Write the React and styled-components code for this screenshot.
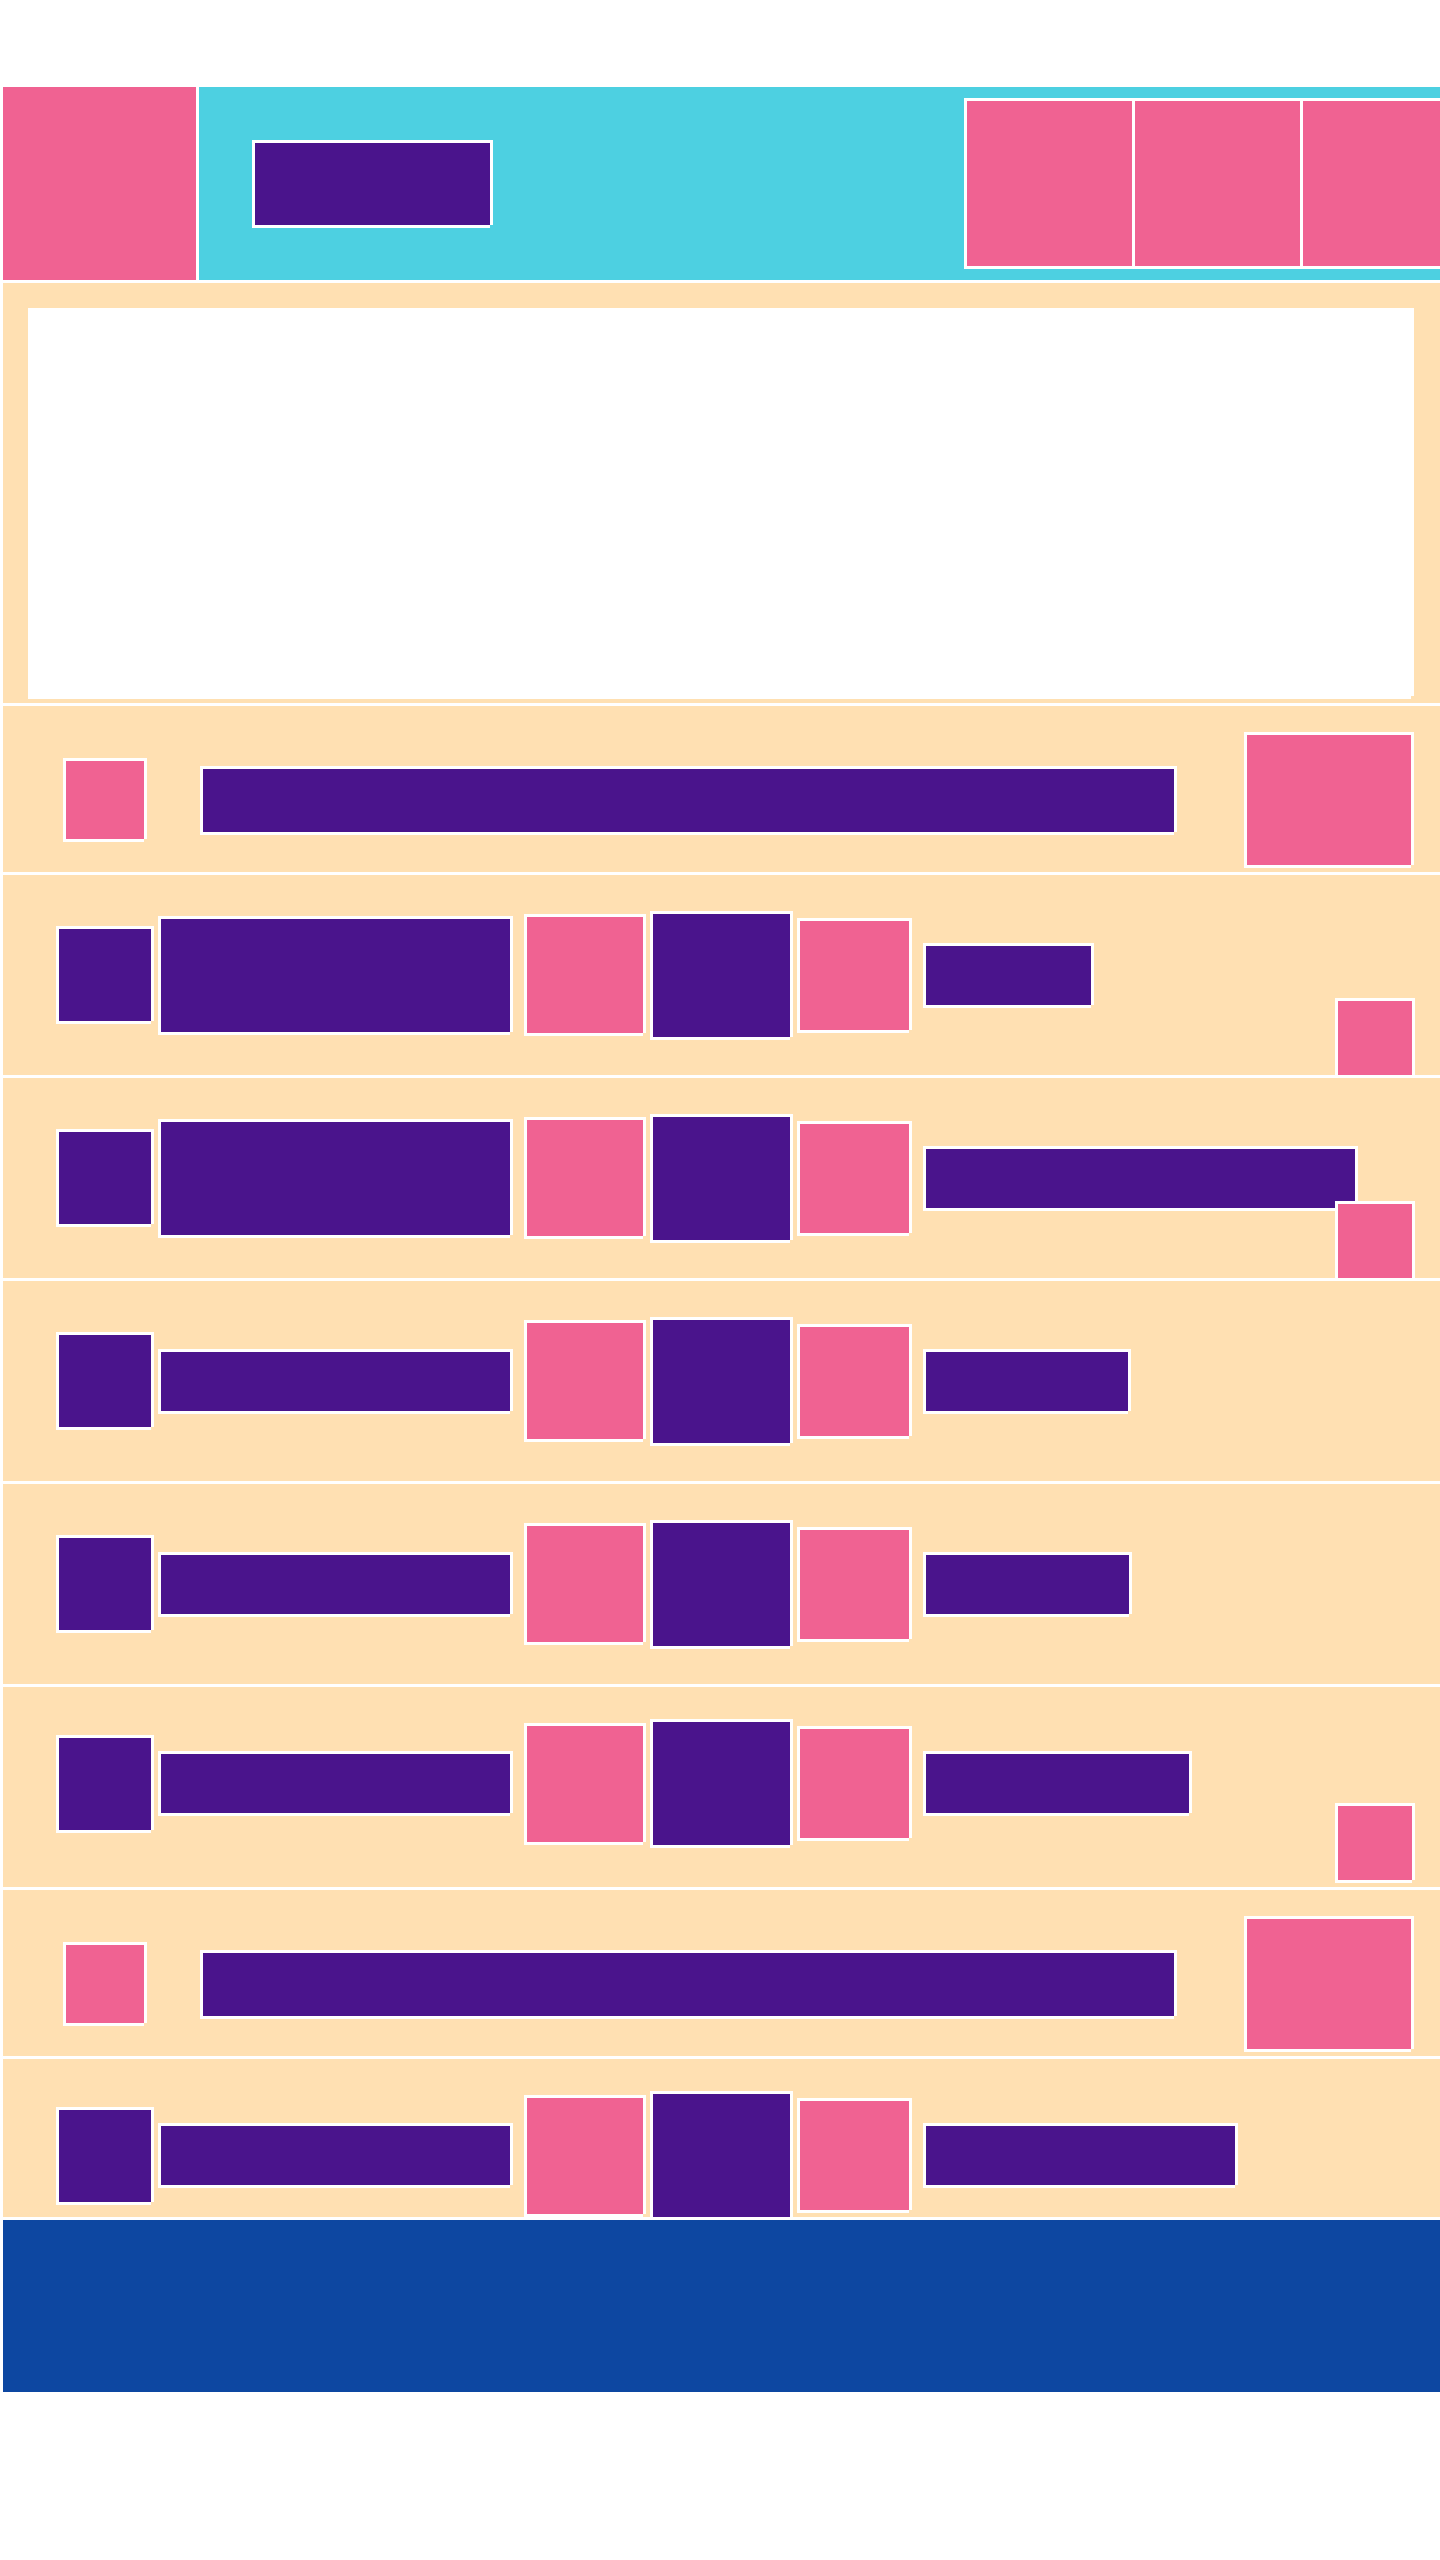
import React from "react"
import styled, { createGlobalStyle, css } from "styled-components"

const PINK = "#f06292"
const CYAN = "#4dd0e1"
const PURPLE = "#4a148c"
const PEACH = "#ffe0b2"
const BLUE = "#0d47a1"

const GlobalStyle = createGlobalStyle`
  * {
    box-sizing: border-box;
  }
  html,
  body {
    margin: 0;
    padding: 0;
    background: #fff;
  }
  body {
    overflow-x: hidden;
    font-family: "Liberation Sans", Arial, sans-serif;
  }
`

// white frame: drawn on top/left, cast on right/bottom so neighbours share one 3px line
const framed = css`
  border-top: 3px solid #fff;
  border-left: 3px solid #fff;
  box-shadow: 3px 0 0 #fff, 0 3px 0 #fff;
`

const Page = styled.div`
  width: 1440px;
  padding-top: 84px;
  overflow: hidden;
`

const Header = styled.header`
  display: flex;
  height: 196px;
`

const Logo = styled.div`
  ${framed}
  flex: none;
  width: 196px;
  height: 196px;
  background: ${PINK};
`

const Nav = styled.nav`
  ${framed}
  flex: 1;
  min-width: 0;
  display: flex;
  align-items: center;
  background: ${CYAN};
`

// $w / $h are the coloured area, the frame is added around it
const Box = styled.div`
  ${framed}
  flex: none;
  width: ${p => p.$w + 3}px;
  height: ${p => p.$h + 3}px;
  margin-bottom: 3px;
  background: ${p => p.$tone};
`

const MenuButton = styled(Box)`
  margin-left: 53px;
`

const Tabs = styled.div`
  display: flex;
  flex: none;
  margin-left: 474px;
`

const Main = styled.main`
  height: 1937px;
  overflow: hidden;
`

const Hero = styled.section`
  ${framed}
  background: ${PEACH};
  padding: 25px 25px 4px;
`

const SummaryRow = styled.div`
  ${framed}
  display: flex;
  align-items: center;
  height: 169px;
  padding: 22px 29px 0 60px;
  background: ${PEACH};
`

const Headline = styled(Box)`
  margin-left: 56px;
`

const Cover = styled(Box)`
  margin-left: auto;
`

const DetailRow = styled.div`
  ${framed}
  position: relative;
  display: flex;
  align-items: center;
  height: 203px;
  padding: 0 28px ${p => p.$lift || 0}px 53px;
  background: ${PEACH};
`

const Gap = styled(Box)`
  margin-left: ${p => p.$gap}px;
`

const Marker = styled(Box)`
  position: absolute;
  right: 28px;
  bottom: ${p => p.$lift || 0}px;
  margin: 0;
`

const Footer = styled.footer`
  ${framed}
  height: 175px;
  background: ${BLUE};
`

const rows = [
  { kind: "summary" },
  { kind: "detail", title: 113, bar: 165, marker: true },
  { kind: "detail", title: 113, bar: 429, marker: true },
  { kind: "detail", title: 59, bar: 202 },
  { kind: "detail", title: 59, bar: 203 },
  { kind: "detail", title: 59, bar: 263, marker: true, lift: 7 },
  { kind: "summary" },
  { kind: "detail", title: 59, bar: 309, lift: 7 },
]

function Summary() {
  return (
    <SummaryRow>
      <Box $w={78} $h={78} $tone={PINK} />
      <Headline $w={971} $h={63} $tone={PURPLE} />
      <Cover $w={164} $h={130} $tone={PINK} />
    </SummaryRow>
  )
}

function Detail({ row }) {
  return (
    <DetailRow $lift={row.lift}>
      <Box $w={92} $h={92} $tone={PURPLE} />
      <Gap $gap={7} $w={349} $h={row.title} $tone={PURPLE} />
      <Gap $gap={14} $w={116} $h={116} $tone={PINK} />
      <Gap $gap={7} $w={137} $h={123} $tone={PURPLE} />
      <Gap $gap={7} $w={109} $h={109} $tone={PINK} />
      <Gap $gap={14} $w={row.bar} $h={59} $tone={PURPLE} />
      {row.marker && (
        <Marker $lift={row.lift} $w={74} $h={74} $tone={PINK} />
      )}
    </DetailRow>
  )
}

export default function App() {
  return (
    <>
      <GlobalStyle />
      <Page>
        <Header>
          <Logo />
          <Nav>
            <MenuButton $w={235} $h={82} $tone={PURPLE} />
            <Tabs>
              <Box $w={165} $h={165} $tone={PINK} />
              <Box $w={165} $h={165} $tone={PINK} />
              <Box $w={165} $h={165} $tone={PINK} />
            </Tabs>
          </Nav>
        </Header>

        <Main>
          <Hero>
            <Box $w={1380} $h={385} $tone="#fff" />
          </Hero>
          {rows.map((row, i) =>
            row.kind === "summary" ? (
              <Summary key={i} />
            ) : (
              <Detail key={i} row={row} />
            )
          )}
        </Main>

        <Footer />
      </Page>
    </>
  )
}
